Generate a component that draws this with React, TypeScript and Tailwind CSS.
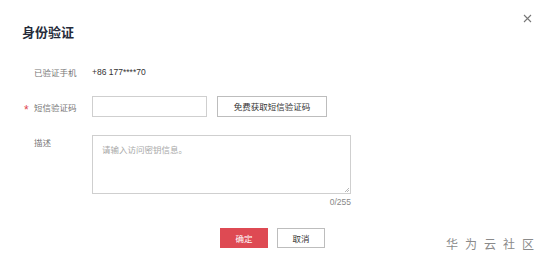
import React from "react";

export default function App() {
  const font = { fontFamily: '"Noto Sans CJK SC", "Noto Sans", sans-serif' };
  return (
    <div className="relative w-[544px] h-[269px] bg-white overflow-hidden" style={font}>
      <button className="absolute left-[522px] top-[13px] w-[10px] h-[10px] flex items-center justify-center">
        <svg width="9" height="9" viewBox="0 0 9 9" fill="none" stroke="#777" strokeWidth="1.1">
          <path d="M1 1L8 8M8 1L1 8" />
        </svg>
      </button>
      <div className="flex flex-col pt-[22px]">
        <div className="pl-[22px] text-[13px] leading-[20px] font-bold text-[#252b3a]">身份验证</div>

        <div className="mt-[24px] flex items-center h-[12px]">
          <div className="w-[92px] pl-[34px] text-[8.5px] leading-[12px] text-[#777]">已验证手机</div>
          <div className="text-[8.5px] leading-[12px] text-[#333]" style={{ fontFamily: '"Liberation Sans", "Noto Sans CJK SC", sans-serif' }}>+86 177****70</div>
        </div>

        <div className="mt-[18px] flex items-center h-[21px]">
          <div className="w-[92px] pl-[24px] flex items-center text-[8.5px] leading-[12px] text-[#777]">
            <span className="w-[10px] h-[12px] flex items-center text-[#e0454f] text-[12px] leading-[12px]" style={{ fontFamily: '"Liberation Sans", sans-serif' }}>
              <span className="relative top-[3px]">*</span>
            </span>
            <span>短信验证码</span>
          </div>
          <div className="w-[115px] h-[21px] border border-[#cfcfcf] bg-white"></div>
          <button className="ml-[10px] w-[110px] h-[21px] border border-[#bdbdbd] bg-white text-[8.5px] text-[#333] flex items-center justify-center">
            免费获取短信验证码
          </button>
        </div>

        <div className="mt-[18px] flex items-start">
          <div className="w-[92px] pl-[34px] pt-[1px] text-[8.5px] leading-[12px] text-[#777]">描述</div>
          <div className="flex flex-col items-end">
            <div className="relative w-[259px] h-[59px] border border-[#cfcfcf] bg-white pl-[9px] pt-[7px] text-[8.5px] leading-[12px] text-[#a8a8a8]">
              请输入访问密钥信息。
              <svg className="absolute right-[1px] bottom-[1px]" width="5" height="5" viewBox="0 0 5 5" stroke="#999" strokeWidth="0.7">
                <path d="M5 1L1 5M5 3L3 5" />
              </svg>
            </div>
            <div className="mt-[3px] text-[8.5px] leading-[11px] text-[#888]" style={{ fontFamily: '"Liberation Sans", sans-serif' }}>0/255</div>
          </div>
        </div>

        <div className="mt-[20px] flex pl-[220px] gap-[9px]">
          <button className="w-[48px] h-[20px] bg-[#de4a53] text-white text-[8.5px] flex items-center justify-center">确定</button>
          <button className="w-[48px] h-[20px] border border-[#bdbdbd] bg-white text-[#333] text-[8.5px] flex items-center justify-center">取消</button>
        </div>
      </div>

      <div className="absolute left-[446px] top-[236px] text-[12px] leading-[16px] tracking-[7px] text-[#8a8a8a] whitespace-nowrap">华为云社区</div>
    </div>
  );
}
